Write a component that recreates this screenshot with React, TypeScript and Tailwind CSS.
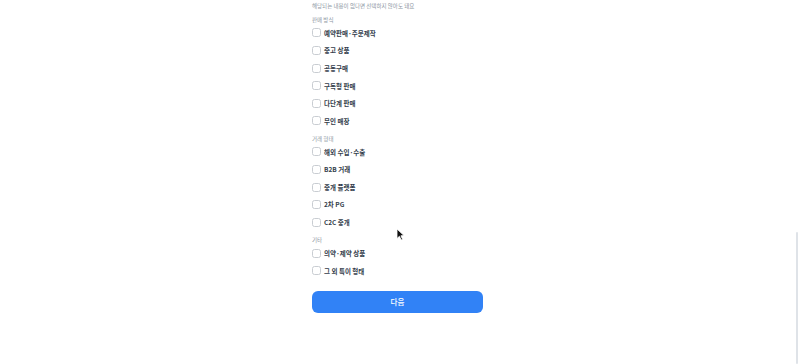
const SECTIONS = [
  {
    label: "판매 방식",
    items: ["예약판매·주문제작", "중고 상품", "공동구매", "구독형 판매", "다단계 판매", "무인 매장"],
  },
  {
    label: "거래 형태",
    items: ["해외 수입·수출", "B2B 거래", "중개 플랫폼", "2차 PG", "C2C 중개"],
  },
  {
    label: "기타",
    items: ["의약·제약 상품", "그 외 특이 형태"],
  },
];

function CheckItem({ label }: { label: string }) {
  return (
    <label className="flex h-[17.6px] items-center gap-[3px] cursor-pointer">
      <span className="block h-[9px] w-[9px] rounded-[2.5px] border border-[#c9cdd2] bg-white" />
      <span className="text-[6.5px] font-bold leading-none text-[#333d4b]">{label}</span>
    </label>
  );
}

export default function App() {
  return (
    <div
      className="relative h-[364px] w-[800px] overflow-hidden bg-white"
      style={{ fontFamily: '"Noto Sans CJK KR", "Noto Sans", sans-serif' }}
    >
      <div className="ml-[312px] w-[171px] pt-[2px]">
        <p className="h-[8px] text-[5.5px] leading-[8px] text-[#8b95a1]">
          해당되는 내용이 없다면 선택하지 않아도 돼요
        </p>
        <div className="mt-[5.8px] flex flex-col gap-[5px]">
          {SECTIONS.map((s) => (
            <div key={s.label} className="flex flex-col">
              <p className="h-[8.4px] text-[5.5px] leading-[8.4px] text-[#8b95a1]">{s.label}</p>
              {s.items.map((it) => (
                <CheckItem key={it} label={it} />
              ))}
            </div>
          ))}
        </div>
        <button className="mt-[11px] flex h-[22px] w-full items-center justify-center rounded-[6px] bg-[#3182f6] text-[7.5px] font-medium text-white">
          다음
        </button>
      </div>
      {/* mouse pointer */}
      <svg className="absolute left-[396px] top-[228px]" width="9" height="13" viewBox="0 0 9 13">
        <path d="M1 1 L1 10.5 L3.4 8.3 L5.2 12 L6.6 11.3 L4.9 7.8 L8 7.6 Z" fill="#111" stroke="#fff" strokeWidth="0.8" />
      </svg>
      <div className="absolute right-[2px] top-[232px] h-[132px] w-[2px] rounded-full bg-[#dfe3e8]" />
    </div>
  );
}
